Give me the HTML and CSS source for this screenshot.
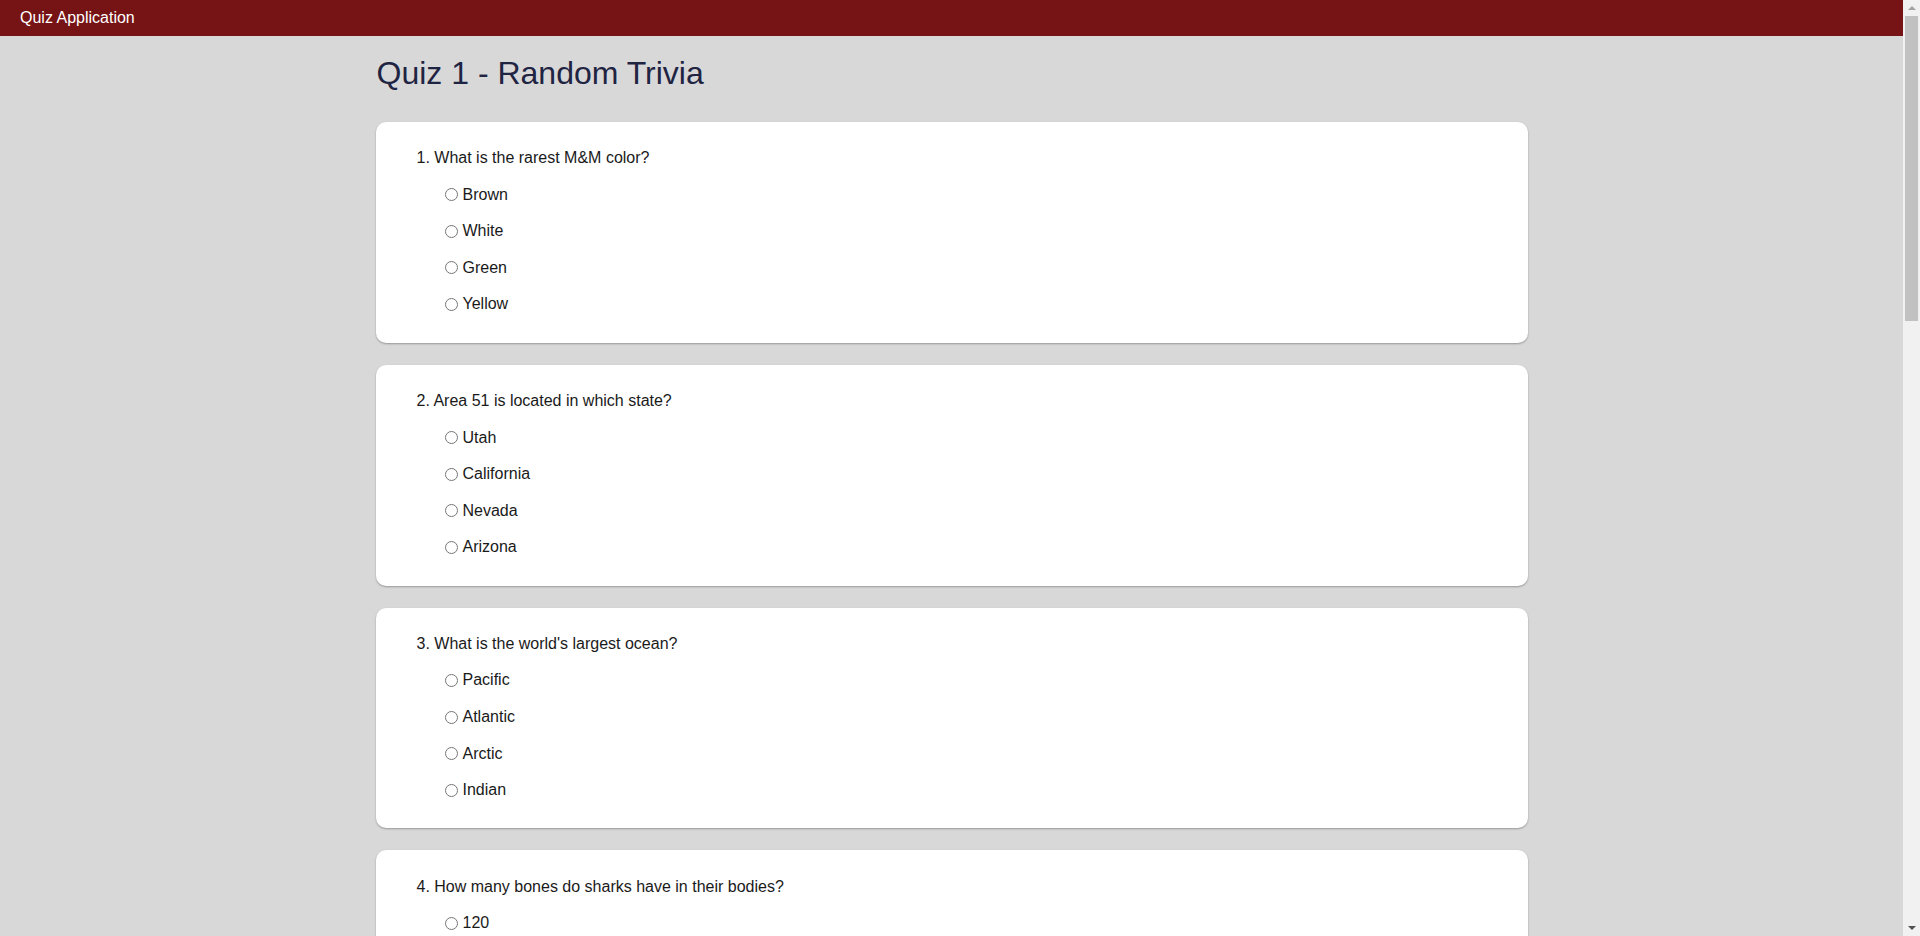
FILE: index.html
```html
<!DOCTYPE html>
<html lang="en">
<head>
<meta charset="utf-8">
<title>Quiz Application</title>
<link rel="stylesheet" href="styles.css">
</head>
<body>
<header class="topbar"><span class="brand">Quiz Application</span></header>
<main class="container">
  <h1 class="quiz-title">Quiz 1 - Random Trivia</h1>

  <section class="card">
    <div class="question">1. What is the rarest M&amp;M color?</div>
    <label class="option"><input type="radio" name="q1">Brown</label>
    <label class="option"><input type="radio" name="q1">White</label>
    <label class="option"><input type="radio" name="q1">Green</label>
    <label class="option"><input type="radio" name="q1">Yellow</label>
  </section>

  <section class="card">
    <div class="question">2. Area 51 is located in which state?</div>
    <label class="option"><input type="radio" name="q2">Utah</label>
    <label class="option"><input type="radio" name="q2">California</label>
    <label class="option"><input type="radio" name="q2">Nevada</label>
    <label class="option"><input type="radio" name="q2">Arizona</label>
  </section>

  <section class="card">
    <div class="question">3. What is the world's largest ocean?</div>
    <label class="option"><input type="radio" name="q3">Pacific</label>
    <label class="option"><input type="radio" name="q3">Atlantic</label>
    <label class="option"><input type="radio" name="q3">Arctic</label>
    <label class="option"><input type="radio" name="q3">Indian</label>
  </section>

  <section class="card">
    <div class="question">4. How many bones do sharks have in their bodies?</div>
    <label class="option"><input type="radio" name="q4">120</label>
    <label class="option"><input type="radio" name="q4">0</label>
    <label class="option"><input type="radio" name="q4">206</label>
    <label class="option"><input type="radio" name="q4">350</label>
  </section>

  <section class="card">
    <div class="question">5. Which planet is closest to the sun?</div>
    <label class="option"><input type="radio" name="q5">Venus</label>
    <label class="option"><input type="radio" name="q5">Mercury</label>
    <label class="option"><input type="radio" name="q5">Mars</label>
    <label class="option"><input type="radio" name="q5">Earth</label>
  </section>
</main>
<div class="scrollbar" aria-hidden="true">
  <span class="sb-arrow sb-up"></span>
  <span class="sb-thumb"></span>
  <span class="sb-arrow sb-down"></span>
</div>
</body>
</html>
```

FILE: styles.css
```css
html, body {
  margin: 0;
  padding: 0;
}
body {
  background: #d8d8d8;
  font-family: "Liberation Sans", Arial, sans-serif;
  font-size: 16px;
  color: #1a1a1a;
  padding-right: 17px;
}
.topbar {
  height: 36px;
  background: #761315;
  display: flex;
  align-items: center;
  padding: 0 20px;
}
.brand {
  color: #ffffff;
  font-size: 16px;
  line-height: 18px;
}
.container {
  max-width: 1152px;
  margin: 0 auto;
  padding-bottom: 40px;
}
.quiz-title {
  font-size: 32px;
  font-weight: normal;
  color: #1f2442;
  margin: 19px 0 30px 1px;
  line-height: 36.8px;
}
.card {
  background: #ffffff;
  border-radius: 10px;
  box-shadow: 0 1px 2px rgba(0, 0, 0, 0.3);
  padding: 18px 0 19.9px;
  margin-bottom: 22px;
  display: flex;
  flex-direction: column;
}
.question {
  height: 36.6px;
  display: flex;
  align-items: center;
  padding-left: 41px;
  color: #1a1a1a;
}
.option {
  height: 36.6px;
  display: flex;
  align-items: center;
  padding-left: 64px;
  color: #1a1a1a;
}
.option input {
  width: 13px;
  height: 13px;
  margin: 0 5px 0 5px;
}

/* decorative browser scrollbar overlay */
.scrollbar {
  position: fixed;
  top: 0;
  right: 0;
  bottom: 0;
  width: 17px;
  background: #f1f1f1;
  display: flex;
  flex-direction: column;
  align-items: center;
}
.sb-arrow {
  width: 0;
  height: 0;
  border-left: 4px solid transparent;
  border-right: 4px solid transparent;
}
.sb-up {
  margin-top: 6px;
  border-bottom: 4px solid #a3a3a3;
}
.sb-down {
  margin-top: auto;
  margin-bottom: 6px;
  border-top: 4px solid #505050;
}
.sb-thumb {
  width: 13px;
  height: 305px;
  margin-top: 6px;
  background: #c1c1c1;
}
```
